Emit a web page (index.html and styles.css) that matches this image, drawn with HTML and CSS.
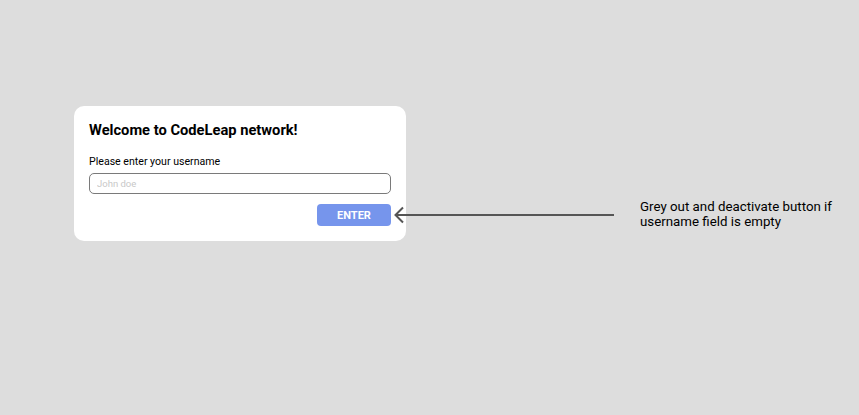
FILE: index.html
```html
<!DOCTYPE html>
<html lang="en">
<head>
<meta charset="utf-8">
<title>CodeLeap signup</title>
<link rel="stylesheet" href="styles.css">
</head>
<body>
<main class="canvas">
  <section class="card">
    <h1 class="card-title">Welcome to CodeLeap network!</h1>
    <label class="field-label" for="username">Please enter your username</label>
    <input class="field-input" id="username" type="text" placeholder="John doe">
    <div class="actions">
      <button class="btn-enter" type="button" disabled>ENTER</button>
    </div>
  </section>
  <svg class="annot-arrow" width="222" height="18" viewBox="0 0 222 18">
    <line x1="2" y1="9" x2="220" y2="9" stroke="#555" stroke-width="2"/>
    <polyline points="9,1.5 1.5,9 9,16.5" fill="none" stroke="#555" stroke-width="2"/>
  </svg>
  <p class="annot-note">Grey out and deactivate button if<br>username field is empty</p>
</main>
</body>
</html>
```

FILE: styles.css
```css
html, body {
  margin: 0;
  padding: 0;
}
body {
  background: #dddddd;
  font-family: Roboto, "Liberation Sans", sans-serif;
  width: 859px;
  height: 415px;
  overflow: hidden;
}
.canvas {
  position: relative;
  width: 859px;
  height: 415px;
  padding: 106px 0 0 74px;
  box-sizing: border-box;
}
.card {
  width: 332px;
  height: 135px;
  box-sizing: border-box;
  background: #ffffff;
  border-radius: 10px;
  padding: 15px 15px;
  display: flex;
  flex-direction: column;
}
.card-title {
  margin: 0;
  font-size: 14.7px;
  font-weight: 700;
  line-height: 18px;
  color: #000;
}
.field-label {
  margin-top: 16px;
  font-size: 10.6px;
  line-height: 13px;
  color: #000;
}
.field-input {
  margin-top: 5px;
  width: 302px;
  height: 21px;
  box-sizing: border-box;
  border: 1px solid #7a7a7a;
  border-radius: 5px;
  padding: 0 7px;
  font-family: Roboto, "Liberation Sans", sans-serif;
  font-size: 9.5px;
  outline: none;
}
.field-input::placeholder {
  color: #c8c8c8;
}
.actions {
  margin-top: 10px;
  display: flex;
  justify-content: flex-end;
}
.btn-enter {
  width: 74px;
  height: 22px;
  border: none;
  border-radius: 4px;
  background: #7695ec;
  color: #ffffff;
  font-family: Roboto, "Liberation Sans", sans-serif;
  font-weight: 700;
  font-size: 11px;
  padding: 0;
}
.annot-arrow {
  position: absolute;
  left: 394px;
  top: 206px;
}
.annot-note {
  position: absolute;
  left: 640px;
  top: 199px;
  margin: 0;
  font-size: 13.3px;
  line-height: 15px;
  color: #000;
}
```
